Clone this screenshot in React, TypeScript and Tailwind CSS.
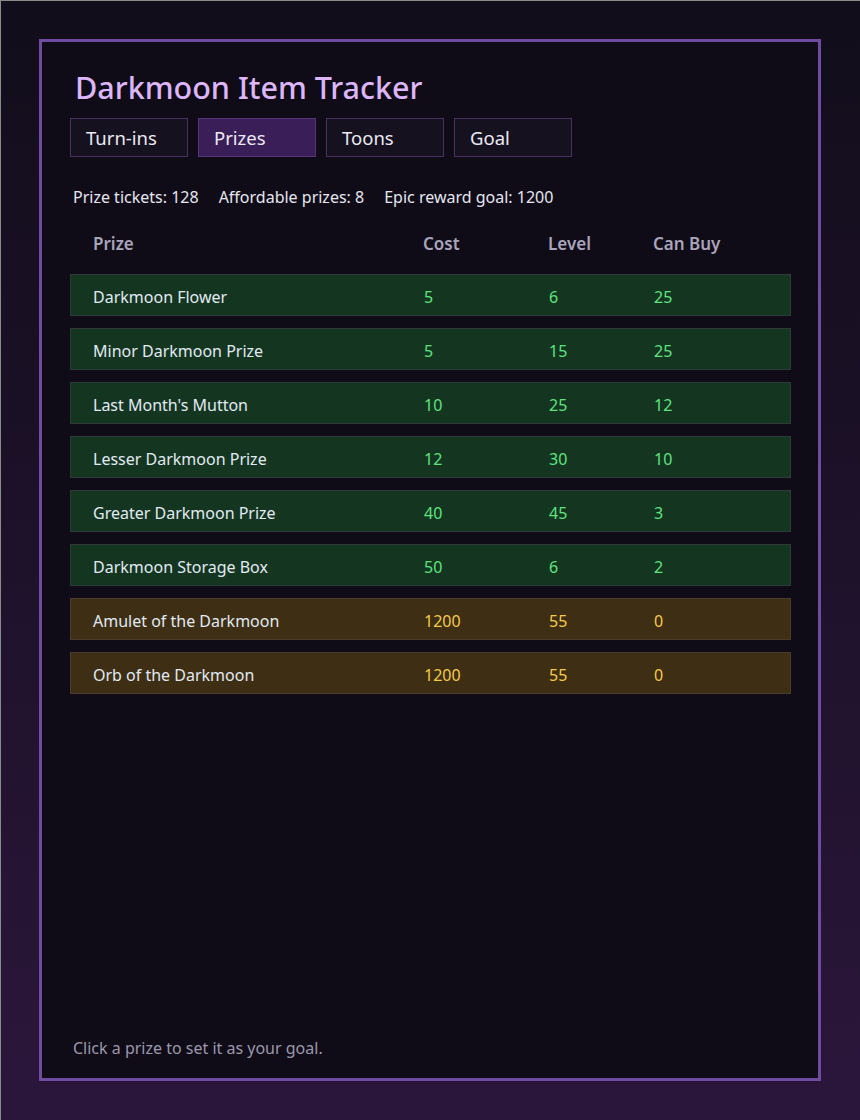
import React from "react";

type Row = { name: string; cost: number; level: number; can: number; epic?: boolean };

const rows: Row[] = [
  { name: "Darkmoon Flower", cost: 5, level: 6, can: 25 },
  { name: "Minor Darkmoon Prize", cost: 5, level: 15, can: 25 },
  { name: "Last Month's Mutton", cost: 10, level: 25, can: 12 },
  { name: "Lesser Darkmoon Prize", cost: 12, level: 30, can: 10 },
  { name: "Greater Darkmoon Prize", cost: 40, level: 45, can: 3 },
  { name: "Darkmoon Storage Box", cost: 50, level: 6, can: 2 },
  { name: "Amulet of the Darkmoon", cost: 1200, level: 55, can: 0, epic: true },
  { name: "Orb of the Darkmoon", cost: 1200, level: 55, can: 0, epic: true },
];

const tabs = ["Turn-ins", "Prizes", "Toons", "Goal"];

export default function App() {
  return (
    <div
      className="h-[1120px] w-full box-border pt-[38px] pl-[38px] pr-[39px] pb-[39px] bg-gradient-to-b from-[#110d1a] to-[#2b163b] border-t border-l border-[#8a8a8a]"
      style={{ fontFamily: '"Noto Sans", "Open Sans", sans-serif' }}
    >
      <div className="h-full flex flex-col border-[3px] border-[#6f4c9f] bg-[#0f0c18] pl-[28px] pr-[27px] pt-[25px] pb-[18px] box-border">
        <h1 className="text-[30.5px] leading-[40px] font-medium text-[#dcb6f8] pl-[5px]">Darkmoon Item Tracker</h1>
        <div className="flex gap-[10px] mt-[11px]">
          {tabs.map((t) => (
            <div
              key={t}
              className={
                "w-[118px] h-[39px] flex items-center pl-[15px] pt-[1px] text-[18.5px] text-[#ece9f4] border " +
                (t === "Prizes" ? "bg-[#3a1e57] border-[#55357a]" : "bg-[#15111e] border-[#46305f]")
              }
            >
              {t}
            </div>
          ))}
        </div>
        <div className="flex gap-[20px] mt-[28px] pl-[3px] text-[16px] text-[#e6e6f0] leading-[24px]">
          <span>Prize tickets: 128</span>
          <span>Affordable prizes: 8</span>
          <span>Epic reward goal: 1200</span>
        </div>
        <div className="grid grid-cols-[353px_125px_105px_1fr] mt-[22px] h-[26px] items-center text-[17px] font-semibold text-[#aaa4ba]">
          <span className="pl-[23px]">Prize</span>
          <span>Cost</span>
          <span>Level</span>
          <span>Can Buy</span>
        </div>
        <div className="flex flex-col gap-[12px] mt-[17px]">
          {rows.map((r) => (
            <div
              key={r.name}
              className={
                "grid grid-cols-[353px_125px_105px_1fr] h-[42px] pt-[4px] items-center text-[16px] border box-border " +
                (r.epic ? "bg-[#3d2e14] border-[#4a3c2e]" : "bg-[#143621] border-[#2d3a35]")
              }
            >
              <span className="pl-[22px] text-[#e1eaf2]">{r.name}</span>
              <span className={r.epic ? "text-[#f6ca4a]" : "text-[#5fe37e]"}>{r.cost}</span>
              <span className={r.epic ? "text-[#f6ca4a]" : "text-[#5fe37e]"}>{r.level}</span>
              <span className={r.epic ? "text-[#f6ca4a]" : "text-[#5fe37e]"}>{r.can}</span>
            </div>
          ))}
        </div>
        <div className="mt-auto pl-[3px] text-[16px] text-[#9c98ab]">Click a prize to set it as your goal.</div>
      </div>
    </div>
  );
}
